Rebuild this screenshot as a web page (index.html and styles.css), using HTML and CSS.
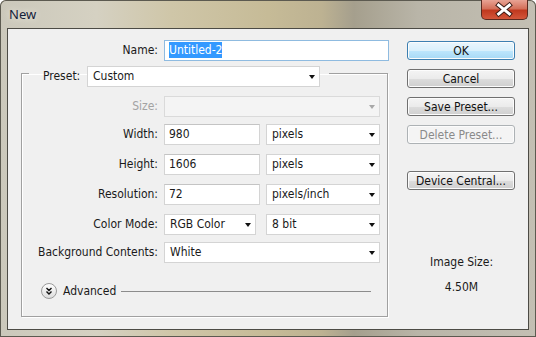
FILE: index.html
```html
<!DOCTYPE html>
<html lang="en">
<head>
    <meta charset="UTF-8">
    <title>New</title>
    <link rel="stylesheet" href="styles.css">
</head>
<body>
    <div class="window">
        <div class="titlebar">
            <span class="title">New</span>
            <span class="close">
                <svg width="47" height="20" viewBox="0 0 47 20">
                    <path d="M18 5 L29 14 M29 5 L18 14" stroke="#3a1a14" stroke-width="5" stroke-linecap="square"/>
                    <path d="M18 5 L29 14 M29 5 L18 14" stroke="#fff" stroke-width="3" stroke-linecap="square"/>
                </svg>
            </span>
        </div>

        <div class="client">
            <div class="form">
                <!-- имя документа -->
                <div class="name-row">
                    <span class="label">Name:</span>
                    <div class="field focused"><span class="selected">Untitled-2</span></div>
                </div>

                <fieldset class="group">
                    <legend>
                        <span class="legend-label">Preset:</span>
                        <div class="dropdown preset">Custom<i class="caret"></i></div>
                    </legend>

                    <div class="grid">
                        <span class="label disabled">Size:</span>
                        <div class="controls">
                            <div class="dropdown wide disabled"><i class="caret"></i></div>
                        </div>

                        <span class="label tight">Width:</span>
                        <div class="controls tight">
                            <div class="field num">980</div>
                            <div class="dropdown unit">pixels<i class="caret"></i></div>
                        </div>

                        <span class="label">Height:</span>
                        <div class="controls">
                            <div class="field num">1606</div>
                            <div class="dropdown unit">pixels<i class="caret"></i></div>
                        </div>

                        <span class="label">Resolution:</span>
                        <div class="controls">
                            <div class="field num">72</div>
                            <div class="dropdown unit">pixels/inch<i class="caret"></i></div>
                        </div>

                        <span class="label">Color Mode:</span>
                        <div class="controls mode">
                            <div class="dropdown color">RGB Color<i class="caret"></i></div>
                            <div class="dropdown unit">8 bit<i class="caret"></i></div>
                        </div>

                        <span class="label tight">Background Contents:</span>
                        <div class="controls tight">
                            <div class="dropdown wide">White<i class="caret"></i></div>
                        </div>
                    </div>

                    <!-- дополнительные параметры -->
                    <div class="advanced">
                        <svg class="expand" width="16" height="16" viewBox="0 0 16 16">
                            <defs>
                                <linearGradient id="btn" x1="0" y1="0" x2="0" y2="1">
                                    <stop offset="0" stop-color="#ffffff"/>
                                    <stop offset="1" stop-color="#dcdcdc"/>
                                </linearGradient>
                            </defs>
                            <circle cx="8" cy="8" r="7.5" fill="url(#btn)" stroke="#9a9a9a"/>
                            <path d="M5.5 5 L8 7.5 L10.5 5 M5.5 8.5 L8 11 L10.5 8.5" fill="none" stroke="#111" stroke-width="1.4"/>
                        </svg>
                        <span class="adv-label">Advanced</span>
                        <span class="rule"></span>
                    </div>
                </fieldset>
            </div>

            <div class="side">
                <button class="btn default">OK</button>
                <button class="btn">Cancel</button>
                <button class="btn">Save Preset...</button>
                <button class="btn" disabled>Delete Preset...</button>
                <button class="btn device">Device Central...</button>

                <div class="info">
                    <div>Image Size:</div>
                    <div class="size">4.50M</div>
                </div>
            </div>
        </div>
    </div>
</body>
</html>
```

FILE: styles.css
```css
body {
    margin: 0;
    font-family: "DejaVu Sans Condensed", "DejaVu Sans", sans-serif;
    font-size: 12px;
    color: #1a1a1a;
}
.window {
    width: 536px;
    height: 337px;
    box-sizing: border-box;
    padding: 0 7px 7px 7px;
    background: linear-gradient(90deg, #cbc8bb 0%, #d5d1c2 18%, #cfc6a8 32%, #c6bb97 50%, #bdb292 60%, #a59f8d 66%, #b9b5a8 78%, #c3bfb3 100%);
    border-radius: 6px 6px 0 0;
    box-shadow: inset 0 0 0 1px #5c5a50;
}
.titlebar {
    height: 28px;
    display: flex;
    justify-content: space-between;
    align-items: flex-start;
}
.title {
    font-family: "Noto Sans", sans-serif;
    font-size: 13px;
    color: #14213a;
    padding: 5px 0 0 2px;
    text-shadow: 0 0 6px #f4f1e6;
}
.close {
    width: 47px;
    height: 20px;
    margin-right: 1px;
    border: 1px solid #5a2a20;
    border-top: none;
    border-radius: 0 0 5px 5px;
    background: linear-gradient(#e8a394 0%, #d4705a 45%, #c0391f 55%, #d4563a 100%);
    box-sizing: border-box;
    display: flex;
}
.close svg {
    margin-left: -1px;
}
.client {
    height: 302px;
    box-sizing: border-box;
    border: 1px solid #4c4b45;
    background: #f0f0f0;
    display: flex;
    padding: 11px 0 0 13px;
}
.form {
    width: 368px;
}
.label {
    text-align: right;
    line-height: 21px;
    white-space: nowrap;
}
.label.disabled {
    color: #a3a3a3;
}
.name-row {
    display: grid;
    grid-template-columns: 137px 225px;
    column-gap: 6px;
}
.field {
    height: 21px;
    box-sizing: border-box;
    border: 1px solid #d4d4d4;
    border-top-color: #c4c4c4;
    background: #fff;
    padding-left: 4px;
    line-height: 19px;
}
.field.focused {
    border-color: #8fbbe0;
}
.selected {
    background: #3399ff;
    color: #fff;
    padding: 1px 0;
}
.group {
    width: 367px;
    box-sizing: border-box;
    margin: -2px 0 0 0;
    padding: 9px 0 17px 0;
    border: 1px solid #a0a0a0;
    box-shadow: 1px 1px 0 #fff, inset 1px 1px 0 #fff;
}
.group legend {
    display: flex;
    margin-left: 7px;
    padding: 7px 9px 0 14px;
}
.legend-label {
    width: 44px;
    line-height: 21px;
}
.dropdown {
    position: relative;
    height: 21px;
    box-sizing: border-box;
    border: 1px solid #d4d4d4;
    background: #fff;
    padding-left: 5px;
    line-height: 19px;
}
.caret {
    position: absolute;
    right: 4px;
    top: 8px;
    border-left: 3px solid transparent;
    border-right: 3px solid transparent;
    border-top: 4px solid #111;
}
.dropdown.disabled {
    background: #f4f4f4;
    border-color: #dadada;
}
.dropdown.disabled .caret {
    border-top-color: #a8a8a8;
}
.preset {
    width: 233px;
}
.grid {
    display: grid;
    grid-template-columns: 136px 216px;
    column-gap: 6px;
    row-gap: 9px;
}
.grid .tight {
    margin-top: -2px;
}
.controls {
    display: flex;
    gap: 6px;
}
.controls.mode {
    gap: 10px;
}
.wide {
    width: 216px;
}
.num {
    width: 96px;
}
.unit {
    width: 114px;
}
.color {
    width: 92px;
}
.advanced {
    display: flex;
    align-items: center;
    margin: 20px 16px 0 19px;
    height: 16px;
}
.adv-label {
    margin-left: 6px;
    margin-right: 5px;
}
.rule {
    flex: 1;
    border-top: 1px solid #8c8c8c;
}
.side {
    width: 108px;
    margin-left: 18px;
    padding-top: 1px;
    display: flex;
    flex-direction: column;
    gap: 9px;
}
.btn {
    height: 19px;
    padding: 0;
    font-family: inherit;
    font-size: 12px;
    color: #111;
    border: 1px solid #707070;
    border-radius: 3px;
    background: linear-gradient(#f4f4f4 0%, #ebebeb 50%, #dddddd 51%, #cfcfcf 100%);
    box-shadow: inset 0 0 0 1px #fcfcfc;
}
.btn.default {
    border-color: #3c7fb1;
    background: linear-gradient(#eaf6fd 0%, #d9f0fc 50%, #bee6fd 51%, #a7d9f5 100%);
}
.btn:disabled {
    color: #8a8a8a;
    border-color: #adb2b5;
    background: #f4f4f4;
}
.btn.device {
    margin-top: 18px;
}
.info {
    margin-top: 57px;
    text-align: center;
    line-height: 13px;
    padding-left: 1px;
}
.info .size {
    margin-top: 12px;
}
```
